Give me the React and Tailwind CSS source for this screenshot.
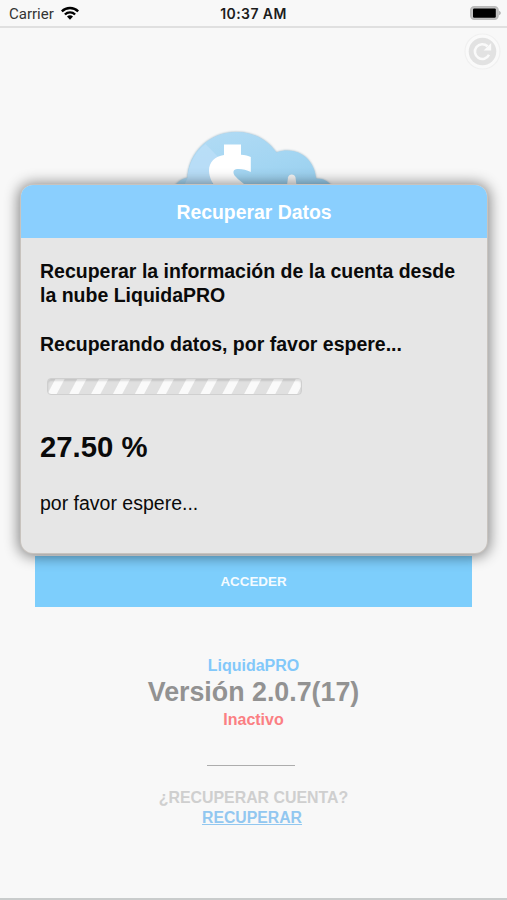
import React from 'react'

const StatusBar = () => (
  <div className="flex h-[28px] shrink-0 items-center border-b-2 border-[#e0e0e0] px-[9px]">
    <div className="flex flex-1 items-center gap-[6px]">
      <span className="pt-[2px] font-['Roboto','Liberation_Sans',sans-serif] text-[15px] leading-[26px] text-[#333]">Carrier</span>
      <WifiIcon />
    </div>
    <span className="pt-px font-['Inter','Liberation_Sans',sans-serif] text-[14px] leading-[27px] font-semibold tracking-[0.4px] text-[#1c1c1c]">10:37 AM</span>
    <div className="flex flex-1 justify-end">
      <BatteryIcon />
    </div>
  </div>
)

const WifiIcon = () => (
  <svg className="ml-px h-[14px] w-[18px]" viewBox="0 0 18 14" fill="none" stroke="#000" strokeWidth="2.4">
    <path d="M.8 5.3a11.8 11.8 0 0 1 16.4 0" />
    <path d="M3.9 8.5a7.3 7.3 0 0 1 10.2 0" />
    <path d="M6 10.6a4.3 4.3 0 0 1 6 0L9 13.8z" fill="#000" stroke="none" />
  </svg>
)

const BatteryIcon = () => (
  <svg className="-mr-[3px] h-[14px] w-[31px]" viewBox="0 0 31 14">
    <rect x=".8" y=".8" width="27.2" height="12.4" rx="3.4" fill="#c4c4c4" stroke="#bababa" strokeWidth="1.6" />
    <rect x="3" y="2.4" width="22.8" height="9.4" rx="1.2" fill="#000" />
    <path d="M29 4.8c1.2.5 1.8 1.2 1.8 2.2S30.2 8.7 29 9.2z" fill="#b4b4b4" />
  </svg>
)

const RefreshButton = () => (
  <button className="mt-[5px] mr-[6px] self-end">
    <svg className="h-[37px] w-[37px]" viewBox="0 0 37 37" fill="none">
      <circle cx="18.5" cy="18.5" r="17.5" fill="#fafafa" stroke="#f0f0f0" strokeWidth="1.2" />
      <circle cx="18.5" cy="18.5" r="13.8" fill="#e2e2e2" />
      <path d="M25 21.8a7.4 7.4 0 1 1-1.5-8.5" stroke="#fafafa" strokeWidth="2.6" />
      <path d="M27.2 10v7.6h-7.6z" fill="#fafafa" />
    </svg>
  </button>
)

const CloudLogo = () => (
  <svg className="mt-[60px] h-[60px] w-[160px] shrink-0 overflow-visible" viewBox="173.5 129.500 160 60">
    <defs>
      <linearGradient id="cloud" x1="0" y1="0" x2="1" y2="1">
        <stop offset="0" stopColor="#b4dcf5" />
        <stop offset=".6" stopColor="#a2d5f2" />
        <stop offset="1" stopColor="#96ccec" />
      </linearGradient>
    </defs>
    <g className="drop-shadow-[0_0_1px_rgba(80,130,160,0.6)]">
      <path d="M172 189C176 182 181 178 187 177.500C188 151 210 131 236 131.500C253 131.500 267 139 276 152C296 145 314 158 315.500 178C323 178 329 181 334 189z" fill="url(#cloud)" />
      <path d="M187 177.500C188 164 194 152 205 143.500L224 163L208 189H182z" fill="#bcdff8" opacity=".8" />
    </g>
    <path d="M223.500 144h17v10.300c4 .2 7.500 1 9.800 2.300v15c-5-2.500-10-3.600-15-2.900c-3 .8-3 4.300-.3 7.300c3 3.600 8 7 16 13h-34c-5-6-8.500-12-8.500-19c0-8.500 6-14.500 15-15.600z" fill="#fff" />
    <path d="M286 189l1.500-12c.8-4 6.700-4 7.500 0l1.500 12z" fill="#f5f5f5" />
  </svg>
)

const ProgressBar = () => (
  <div className="mt-[22px] ml-[7px] h-[17px] w-[255px] rounded-[4px] border border-[#cfcfcf] bg-[repeating-linear-gradient(118deg,#e0e0e0_0px,#e0e0e0_6px,#fafafa_7px,#fafafa_14.2px,#e0e0e0_15.2px,#e0e0e0_19.3px)] shadow-[inset_0_2px_2px_rgba(0,0,0,0.12)]" />
)

const Dialog = () => (
  <div className="absolute top-[185px] left-[21px] flex h-[368px] w-[466px] flex-col overflow-hidden rounded-[12px] bg-[#e6e6e6] shadow-[0_0_0_1px_#c8c3be,0_1px_14px_3px_rgba(0,0,0,0.45)]">
    <div className="h-[53px] bg-[#8acffe] text-center text-[19.4px] leading-[54px] font-bold text-white">Recuperar Datos</div>
    <div className="pt-[21px] pl-[19px] text-[19.5px] leading-[24.4px] text-[#0a0a0a]">
      <p className="font-bold">
        Recuperar la información de la cuenta desde
        <br />
        la nube LiquidaPRO
      </p>
      <p className="mt-[24px] font-bold">Recuperando datos, por favor espere...</p>
      <ProgressBar />
      <p className="mt-[34px] text-[29.3px] leading-[36px] font-bold">27.50 %</p>
      <p className="mt-[26px]">por favor espere...</p>
    </div>
  </div>
)

export default function App() {
  return (
    <div className="relative flex h-[900px] w-[507px] flex-col overflow-hidden border-b-2 border-[#c9cccc] bg-[#f8f8f8] font-['Liberation_Sans',Arial,sans-serif]">
      <StatusBar />
      <RefreshButton />
      <main className="flex flex-1 flex-col items-center">
        <CloudLogo />
        <button className="mt-[366px] h-[51px] w-[437px] shrink-0 bg-[#7dcefc] pt-[2px] text-[13.4px] font-bold text-[#f4fbff]">ACCEDER</button>
        <div className="mt-[49px] text-[16px] leading-[20px] font-bold text-[#82c8fa]">LiquidaPRO</div>
        <div className="text-[26.8px] leading-[32px] font-bold text-[#929292]">Versión 2.0.7(17)</div>
        <div className="mt-[2px] text-[16px] leading-[20px] font-bold text-[#fb7f83]">Inactivo</div>
        <div className="mt-[35px] mr-[5px] h-px w-[88px] bg-[#adadad]" />
        <div className="mt-[22px] text-[15.9px] leading-[20px] font-bold text-[#cfcfcf]">¿RECUPERAR CUENTA?</div>
        <a href="#" className="mr-[3px] text-[15.8px] leading-[20px] font-bold text-[#92c7f0] underline">RECUPERAR</a>
      </main>
      <Dialog />
    </div>
  )
}
